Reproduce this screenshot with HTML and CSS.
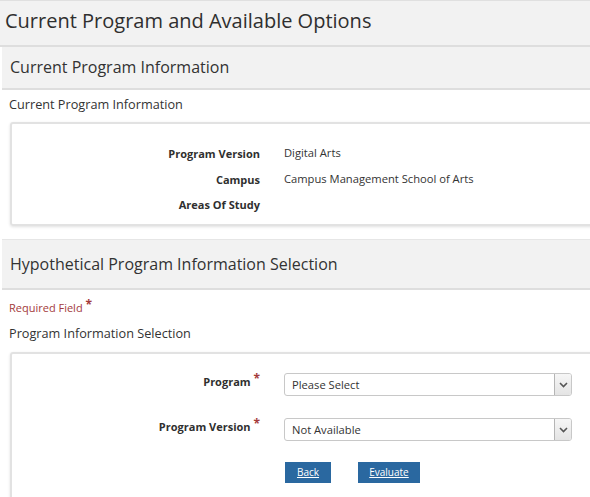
FILE: index.html
```html
<!DOCTYPE html>
<html lang="en">
<head>
<meta charset="utf-8">
<title>Current Program and Available Options</title>
<link rel="stylesheet" href="styles.css">
</head>
<body>
<h1 class="page-title">Current Program and Available Options</h1>

<h2 class="section-head">Current Program Information</h2>
<div class="section-label">Current Program Information</div>
<div class="box info-box">
  <div class="info-grid">
    <div class="lbl">Program Version</div><div class="val">Digital Arts</div>
    <div class="lbl">Campus</div><div class="val">Campus Management School of Arts</div>
    <div class="lbl">Areas Of Study</div><div class="val"></div>
  </div>
</div>

<h2 class="section-head hypo">Hypothetical Program Information Selection</h2>
<div class="required">Required Field <span class="star">*</span></div>
<div class="section-label second">Program Information Selection</div>
<div class="box form-box">
  <div class="form-grid">
    <div class="flbl">Program <span class="star">*</span></div>
    <div class="select"><span class="select-text">Please Select</span><span class="arrow"><svg width="9" height="6" viewBox="0 0 9 6"><path d="M1 1 L4.5 4.5 L8 1" fill="none" stroke="#555" stroke-width="1.6"/></svg></span></div>
    <div class="flbl">Program Version <span class="star">*</span></div>
    <div class="select"><span class="select-text">Not Available</span><span class="arrow"><svg width="9" height="6" viewBox="0 0 9 6"><path d="M1 1 L4.5 4.5 L8 1" fill="none" stroke="#555" stroke-width="1.6"/></svg></span></div>
    <div></div>
    <div class="buttons">
      <a class="btn btn-back" href="#">Back</a>
      <a class="btn btn-eval" href="#">Evaluate</a>
    </div>
  </div>
</div>
</body>
</html>
```

FILE: styles.css
```css
html, body {
  margin: 0;
  padding: 0;
  background: #fff;
}
body {
  font-family: "Open Sans", "Liberation Sans", sans-serif;
  color: #333;
  width: 590px;
  overflow: hidden;
}
.page-title {
  margin: 0;
  height: 44px;
  box-sizing: content-box;
  border-top: 1px solid #e0e0e0;
  border-bottom: 2px solid #dedede;
  background: #f2f2f2;
  font-size: 20px;
  font-weight: normal;
  line-height: 40px;
  padding: 0 0 0 5px;
  color: #2f2f2f;
}
.section-head {
  margin: 0 0 0 2px;
  height: 41px;
  border-bottom: 2px solid #dedede;
  background: #f2f2f2;
  font-size: 16px;
  font-weight: normal;
  line-height: 41px;
  padding-left: 8px;
  color: #333;
}
.section-head.hypo {
  margin-top: 13px;
  height: 48px;
  line-height: 48px;
  border-top: 1px solid #e6e6e6;
}
.section-label {
  font-size: 12.7px;
  line-height: 18px;
  padding: 5px 0 0 9px;
  height: 27px;
}
.section-label.second {
  padding-top: 0;
  height: 28px;
}
.required {
  color: #a33b3b;
  font-size: 11px;
  line-height: 16px;
  padding: 10px 0 0 9px;
  height: 24px;
}
.star {
  color: #a33b3b;
  font-size: 12px;
  font-weight: bold;
  position: relative;
  top: -3px;
}
.box {
  margin-left: 10px;
  margin-right: -20px;
  border: 2px solid #e2e2e2;
  border-radius: 3px;
  box-shadow: 0 1px 3px rgba(0,0,0,0.12);
}
.info-box {
  box-sizing: border-box;
  height: 104px;
  padding-top: 18px;
}
.info-grid {
  display: grid;
  grid-template-columns: 248px 1fr;
  column-gap: 24px;
  grid-auto-rows: 25.5px;
  font-size: 11.2px;
}
.lbl {
  text-align: right;
  font-weight: bold;
  font-size: 11px;
  color: #2f2f2f;
  line-height: 24px;
}
.val {
  color: #333;
  line-height: 22px;
}
.form-box {
  padding: 19px 0 20px;
}
.form-grid {
  display: grid;
  grid-template-columns: 248px 288px;
  column-gap: 24px;
  row-gap: 22px;
  align-items: start;
}
.flbl {
  text-align: right;
  font-weight: bold;
  font-size: 11px;
  line-height: 18px;
  padding-top: 0;
  color: #2f2f2f;
}
.select {
  display: flex;
  align-items: stretch;
  height: 23px;
  box-sizing: border-box;
  border: 1px solid #c8c8c8;
  border-radius: 3px;
  background: #fff;
  overflow: hidden;
}
.select-text {
  flex: 1;
  font-size: 11.2px;
  line-height: 21px;
  padding-left: 7px;
  color: #333;
}
.arrow {
  width: 16px;
  border-left: 1px solid #b5b5b5;
  background: linear-gradient(#f6f6f6, #e4e4e4);
  display: flex;
  align-items: center;
  justify-content: center;
}
.buttons {
  display: flex;
  gap: 27px;
  margin-top: -1px;
  padding-left: 1px;
}
.btn {
  display: block;
  height: 21px;
  line-height: 21px;
  background: #2a68a0;
  color: #fff;
  font-size: 10px;
  text-decoration: underline;
  text-align: center;
}
.btn-back {
  width: 46px;
}
.btn-eval {
  width: 62px;
}
```
